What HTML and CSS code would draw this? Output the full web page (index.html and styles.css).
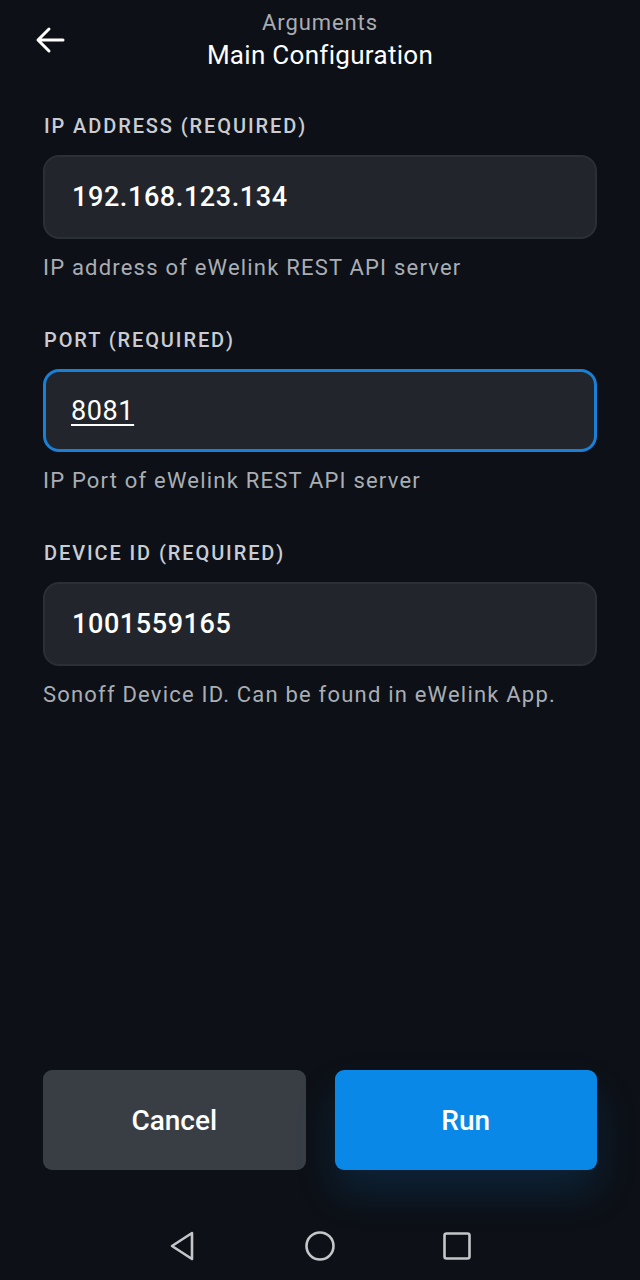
FILE: index.html
```html
<!DOCTYPE html>
<html>
<head>
<meta charset="utf-8">
<link rel="stylesheet" href="styles.css">
</head>
<body>
<div class="screen">
  <header class="topbar">
    <button class="back" aria-label="Back">
      <svg width="32" height="32" viewBox="0 0 32 32"><path d="M29 16H5M15 5L4 16l11 11" fill="none" stroke="#fff" stroke-width="3" stroke-linecap="round" stroke-linejoin="round"/></svg>
    </button>
    <div class="titles">
      <div class="subtitle">Arguments</div>
      <div class="title">Main Configuration</div>
    </div>
  </header>

  <main class="form">
    <div class="field">
      <div class="label">IP ADDRESS (REQUIRED)</div>
      <div class="input">192.168.123.134</div>
      <div class="help">IP address of eWelink REST API server</div>
    </div>
    <div class="field">
      <div class="label">PORT (REQUIRED)</div>
      <div class="input focused"><span class="cursor-word">8081</span></div>
      <div class="help">IP Port of eWelink REST API server</div>
    </div>
    <div class="field">
      <div class="label">DEVICE ID (REQUIRED)</div>
      <div class="input">1001559165</div>
      <div class="help">Sonoff Device ID. Can be found in eWelink App.</div>
    </div>
  </main>

  <div class="actions">
    <button class="btn cancel">Cancel</button>
    <button class="btn run">Run</button>
  </div>

  <nav class="sysnav">
    <svg width="30" height="32" viewBox="0 0 30 32"><path d="M24 3L4 16l20 13z" fill="none" stroke="#c4c6c9" stroke-width="2.6" stroke-linejoin="round"/></svg>
    <svg width="32" height="32" viewBox="0 0 32 32"><circle cx="16" cy="16" r="13.5" fill="none" stroke="#c4c6c9" stroke-width="2.6"/></svg>
    <svg width="30" height="30" viewBox="0 0 30 30"><rect x="2.5" y="2.5" width="25" height="25" rx="2" fill="none" stroke="#c4c6c9" stroke-width="2.6"/></svg>
  </nav>
</div>
</body>
</html>
```
FILE: styles.css
```css
* { box-sizing: border-box; }
html, body {
  margin: 0;
  padding: 0;
  background: #0d1016;
  font-family: Roboto, "Noto Sans", "Liberation Sans", sans-serif;
  color: #fff;
}
.screen {
  width: 640px;
  height: 1280px;
  display: flex;
  flex-direction: column;
  background: #0d1016;
}
.topbar {
  position: relative;
  height: 114px;
  padding-top: 10px;
  display: flex;
  justify-content: center;
}
.back {
  position: absolute;
  left: 34px;
  top: 24px;
  background: none;
  border: 0;
  padding: 0;
  width: 32px;
  height: 32px;
  display: flex;
}
.titles {
  text-align: center;
}
.subtitle {
  font-size: 22px;
  line-height: 26px;
  color: #a9adb3;
  letter-spacing: 0.9px;
}
.title {
  margin-top: 4px;
  font-size: 26px;
  line-height: 30px;
  color: #fff;
  letter-spacing: 0.3px;
}
.form {
  padding: 0 43px;
  display: flex;
  flex-direction: column;
  gap: 48px;
}
.field {
  display: flex;
  flex-direction: column;
}
.label {
  font-size: 20px;
  line-height: 24px;
  font-weight: 500;
  letter-spacing: 1.9px;
  color: #c9cdd3;
  padding-left: 1px;
}
.input {
  margin-top: 17px;
  height: 84px;
  border-radius: 16px;
  background: #22262c;
  border: 2px solid #2b2f36;
  display: flex;
  align-items: center;
  padding-left: 27px;
  font-size: 27px;
  font-weight: 500;
  color: #fff;
  letter-spacing: 0.6px;
}
.input.focused {
  border: 3px solid #1a80d6;
  padding-left: 25px;
  height: 83px;
}
.cursor-word {
  text-decoration: underline;
  text-decoration-thickness: 2px;
  text-underline-offset: 4px;
  font-weight: 400;
}
.help {
  margin-top: 17px;
  font-size: 22px;
  line-height: 24px;
  color: #a9aeb5;
  letter-spacing: 1.2px;
}
.actions {
  margin-top: auto;
  padding: 0 43px;
  display: flex;
  gap: 29px;
}
.btn {
  flex: 1;
  height: 100px;
  border: 0;
  border-radius: 9px;
  font-family: inherit;
  font-size: 28px;
  font-weight: 500;
  color: #fff;
}
.cancel {
  background: #393e45;
}
.run {
  background: #0a88e8;
  box-shadow: 0 22px 40px rgba(10, 120, 210, 0.18);
}
.sysnav {
  margin-top: 38px;
  height: 72px;
  display: flex;
  align-items: center;
  justify-content: center;
  gap: 106px;
  padding-top: 4px;
}
```
